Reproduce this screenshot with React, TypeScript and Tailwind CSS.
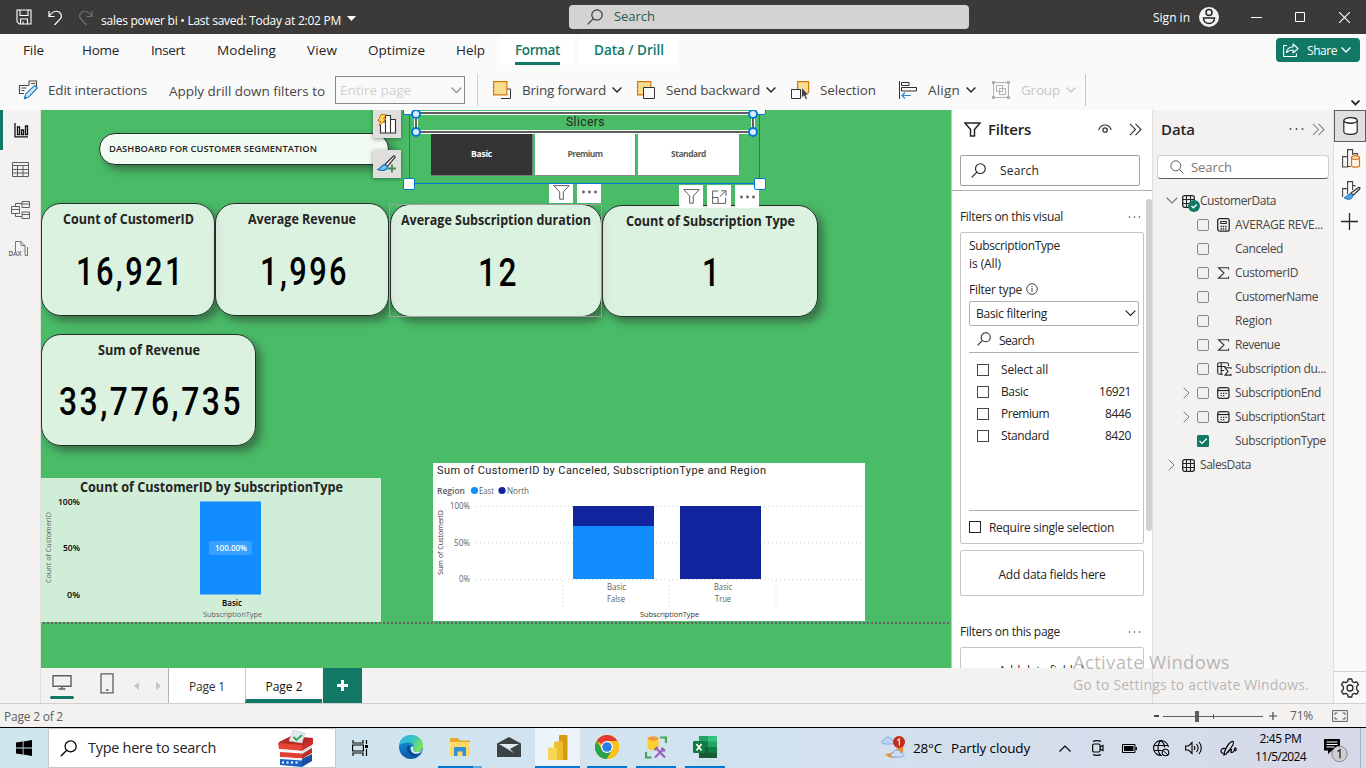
import React, { useLayoutEffect, useRef, useState } from "react";

/* Text set to an exact width, by tracking or (with squeeze) by horizontal scale. */
function Fit({ w, children, className = "", squeeze = false }: { w: number; children: string; className?: string; squeeze?: boolean }) {
  const ref = useRef<HTMLSpanElement>(null);
  const [natural, setNatural] = useState(0);
  useLayoutEffect(() => {
    if (ref.current) setNatural(ref.current.offsetWidth ? ref.current.getBoundingClientRect().width : 0);
  }, []);
  const style: React.CSSProperties = !natural
    ? {}
    : squeeze
      ? { transform: `scaleX(${w / natural})` }
      : { letterSpacing: `${(w - natural) / children.length}px` };
  return (
    <span className={`block shrink-0 whitespace-nowrap ${className}`} style={{ width: w }}>
      <span ref={ref} className="inline-block origin-left" style={style}>{children}</span>
    </span>
  );
}

function Svg({ w, h, className = "", children }: { w: number; h: number; className?: string; children: React.ReactNode }) {
  return (
    <svg width={w} height={h} viewBox={`0 0 ${w} ${h}`} fill="none" className={`block shrink-0 ${className}`}>
      {children}
    </svg>
  );
}

const Magnifier = ({ s = 16, c = "#252423", className = "" }: { s?: number; c?: string; className?: string }) => (
  <svg width={s} height={s} viewBox="0 0 16 16" fill="none" stroke={c} strokeWidth="1.2" className={`block shrink-0 ${className}`}>
    <circle cx="10" cy="6" r="5.2" />
    <path d="M6.3 9.7L.7 15.3" />
  </svg>
);
const ChevronDown = ({ w = 10, c = "#252423", sw = 1.4, className = "" }: { w?: number; c?: string; sw?: number; className?: string }) => (
  <svg width={w} height={w * 0.6} viewBox="0 0 10 6" fill="none" stroke={c} strokeWidth={sw} className={`block shrink-0 ${className}`}>
    <path d="M.6 .6L5 5L9.4 .6" />
  </svg>
);
const DoubleChevron = ({ c = "#323130" }: { c?: string }) => (
  <Svg w={13} h={13}><path d="M1 .8L6.5 6.5L1 12.2M6.5 .8L12 6.5L6.5 12.2" stroke={c} strokeWidth="1.1" /></Svg>
);
const Dots = ({ c = "#484644", gap = 5, r = 0.8 }: { c?: string; gap?: number; r?: number }) => (
  <Svg w={gap * 2 + 3} h={4}>{[0, 1, 2].map((i) => <circle key={i} cx={1.5 + i * gap} cy="2" r={r} fill={c} />)}</Svg>
);

function TitleBar() {
  return (
    <header className="flex h-[34px] shrink-0 items-center bg-[#3b3a39] text-white">
      <Svg w={16} h={16} className="ml-4">
        <path d="M1 1h14v14H3.5L1 12.800zM4 1v5.500h8V1M4.500 15v-5h7v5M7 12.500V15" stroke="#fff" strokeWidth="1.100" />
      </Svg>
      <Svg w={15} h={17} className="ml-4">
        <path d="M1 2v5.500h5.500M1.300 7C4 3 8 1 11.300 3.200C15 6 13 9 12 10.200L6.500 16" stroke="#fff" strokeWidth="1.200" />
      </Svg>
      <Svg w={15} h={17} className="ml-[15px]">
        <path d="M14 2v5.500H8.500M13.700 7C11 3 7 1 3.700 3.200C0 6 2 9 3 10.200L8.500 16" stroke="#737271" strokeWidth="1.200" />
      </Svg>
      <Fit w={240} className="ml-[8px] mt-2 text-xs">sales power bi • Last saved: Today at 2:02 PM</Fit>
      <Svg w={9} h={5} className="ml-[6px] mt-0.5"><path d="M0 0h9L4.500 5z" fill="#fff" /></Svg>
      <div className="ml-[213px] flex h-6 w-[400px] items-center rounded-sm bg-[#d4d3d1]">
        <Magnifier c="#3b3a39" className="ml-[18px]" />
        <Fit w={41} className="ml-[11px] text-[13px] text-[#1f5c50]">Search</Fit>
      </div>
      <Fit w={37} className="ml-[184px] mt-0.5 text-xs">Sign in</Fit>
      <Svg w={20} h={20} className="ml-[9px]">
        <circle cx="10" cy="10" r="10" fill="#f3f2f1" />
        <circle cx="10" cy="5.500" r="3" stroke="#252423" strokeWidth="1.500" />
        <path d="M4.500 11h11c0 3.500-2.500 5.500-5.500 5.500s-5.500-2-5.500-5.500z" stroke="#252423" strokeWidth="1.500" />
      </Svg>
      <Svg w={11} h={11} className="ml-8"><path d="M0 5.500h11" stroke="#fff" /></Svg>
      <Svg w={10} h={10} className="ml-[33px]"><path d="M.5 .5h9v9h-9z" stroke="#fff" /></Svg>
      <Svg w={11} h={11} className="ml-[34px]"><path d="M0 0L11 11M11 0L0 11" stroke="#fff" strokeWidth="1.100" /></Svg>
    </header>
  );
}

function RibbonTabs() {
  const t = "text-[13.500px] text-[#252423]";
  return (
    <nav className="flex h-[32px] shrink-0 items-center">
      <Fit w={21} className={`ml-[23px] ${t}`}>File</Fit>
      <Fit w={37} className={`ml-[38px] ${t}`}>Home</Fit>
      <Fit w={34} className={`ml-[32px] ${t}`}>Insert</Fit>
      <Fit w={59} className={`ml-[32px] ${t}`}>Modeling</Fit>
      <Fit w={30} className={`ml-[31px] ${t}`}>View</Fit>
      <Fit w={57} className={`ml-[31px] ${t}`}>Optimize</Fit>
      <Fit w={29} className={`ml-[31px] ${t}`}>Help</Fit>
      <div className="ml-[15px] flex h-[31px] flex-col justify-end self-start bg-white px-[15px] text-[13.500px] font-semibold text-[#117865]">
        <Fit w={45} className="leading-6">Format</Fit>
        <div className="h-[3px] bg-[#117865]" />
      </div>
      <div className="ml-1 flex h-[31px] w-[100px] self-start bg-white pl-[15px] text-[13.500px] font-semibold text-[#117865]">
        <Fit w={70} className="leading-[32px]">Data / Drill</Fit>
      </div>
      <button className="ml-[597px] flex h-6 w-[84px] items-center rounded bg-[#117865] text-white">
        <Svg w={16} h={14} className="ml-[7px]">
          <path d="M4 2.500H.6v11h12.800V10.500M3.500 9.500C4 6 6.500 4 10 4V1l5 4.500L10 10V7C7.500 7 5.500 7.500 3.500 9.500z" stroke="#fff" strokeWidth="1.100" strokeLinejoin="round" />
        </Svg>
        <Fit w={30} className="ml-2 mt-px text-left text-xs">Share</Fit>
        <ChevronDown c="#fff" className="ml-1" />
      </button>
    </nav>
  );
}

function RibbonTools() {
  const t = "text-[13.500px] text-[#484644]";
  return (
    <div className="flex h-[44px] shrink-0 items-center pt-1">
      <Svg w={20} h={20} className="ml-[18px]">
        <path d="M11 5V1h7.500v6M11 5.500H1.500v8H6M3.500 8h5M3.500 10.500h3M13 3.500h4" stroke="#484644" strokeWidth="1.100" />
        <path d="M6.500 18.500l1.300-4.800L16.500 5.500l2.800 2.500-8.500 9z" fill="#cfe6f8" stroke="#2b88c8" strokeWidth="1.200" />
        <path d="M6 19l1-3 2 2z" fill="#1570b8" />
      </Svg>
      <Fit w={99} className={`ml-[10px] ${t}`}>Edit interactions</Fit>
      <Fit w={156} className={`ml-[22px] mt-0.5 ${t}`}>Apply drill down filters to</Fit>
      <div className="ml-[10px] flex h-[28px] w-[130px] items-center border border-[#8a8886]">
        <Fit w={71} className="ml-[4px] text-[13.500px] text-[#d2d0ce]">Entire page</Fit>
        <ChevronDown w={11} c="#a19f9d" className="ml-[40px]" />
      </div>
      <div className="ml-[12px] h-8 w-px bg-[#d2d0ce]" />
      <Svg w={18} h={18} className="ml-[15px]">
        <path d="M8 17.500h9.500V8H14" stroke="#323130" />
        <path d="M.6 .6h13.300v13.300H.6z" fill="#f9dd8f" stroke="#d97706" strokeWidth="1.200" />
      </Svg>
      <Fit w={84} className={`ml-[11px] ${t}`}>Bring forward</Fit>
      <ChevronDown className="ml-[6px]" />
      <Svg w={18} h={18} className="ml-[15px]">
        <path d="M.6 .6h13.300v13.300H.6z" fill="#f9dd8f" stroke="#d97706" strokeWidth="1.200" />
        <path d="M6.500 6.500h11v11h-11z" fill="#fafafa" stroke="#323130" />
      </Svg>
      <Fit w={94} className={`ml-[11px] ${t}`}>Send backward</Fit>
      <ChevronDown className="ml-[6px]" />
      <Svg w={19} h={19} className="ml-[15px]">
        <path d="M6.600 .6h11v11h-11z" fill="#f9dd8f" stroke="#d97706" strokeWidth="1.200" />
        <path d="M.5 8.500h9v9h-9z" fill="#fafafa" stroke="#323130" />
        <path d="M10.500 6v11l2.500-2.200 1.500 3.700 2-.9-1.500-3.600h3z" fill="#484644" stroke="#fafafa" strokeWidth=".8" />
      </Svg>
      <Fit w={56} className={`ml-[10px] ${t}`}>Selection</Fit>
      <Svg w={18} h={18} className="ml-[23px]">
        <path d="M.5 0v18M2.500 1.500h7.500v3H2.500zM2.500 6.500h15v3.500h-15z" stroke="#323130" />
        <path d="M12 14.500H3M6 11.500l-3 3 3 3" stroke="#2b88c8" strokeWidth="1.200" />
      </Svg>
      <Fit w={32} className={`ml-[11px] ${t}`}>Align</Fit>
      <ChevronDown className="ml-[6px]" />
      <Svg w={18} h={18} className="ml-[16px]">
        <path d="M2 1.500h14M1.500 2v14M16.500 2v14M2 16.500h14M4.500 4.500h6v6h-6zM7.500 7.500h6v6h-6z" stroke="#b3b0ad" />
        <path d="M0 0h3v3H0zM15 0h3v3h-3zM0 15h3v3H0zM15 15h3v3h-3z" fill="#b3b0ad" />
      </Svg>
      <Fit w={39} className="ml-[11px] text-[13.500px] text-[#c8c6c4]">Group</Fit>
      <ChevronDown c="#c8c6c4" className="ml-[6px]" />
      <div className="ml-[9px] h-8 w-px bg-[#c8c6c4]" />
      <ChevronDown w={9} sw={2} className="ml-[265px] mt-[26px]" />
    </div>
  );
}

function LeftRail() {
  return (
    <aside className="flex w-[41px] shrink-0 flex-col items-center border-r border-[#e1dfdd] bg-[#f3f2f1]">
      <div className="flex h-10 w-full items-center border-l-[3px] border-[#117865] pl-[11px]">
        <Svg w={15} h={15}><path d="M1 0v13.800h13M3.500 4h2v7.500h-2zM7.500 7h2v4.500h-2zM11.500 3h2v8.500h-2z" stroke="#111" strokeWidth="1.300" /></Svg>
      </div>
      <Svg w={17} h={15} className="mt-[12px]"><path d="M.5 .5h16v14H.5zM.5 3.500h16M.5 7.500h16M.5 11h16M5.500 3.500v11M11 3.500v11" stroke="#605e5c" /></Svg>
      <Svg w={19} h={18} className="mt-6"><path d="M.5 5.500h8v7h-8zM.5 8.500h8M11 .5h7.500v6H11zM11 3h7.500M11 11h7.500v6.500H11zM11 13.500h7.500M4.500 5.500v-3H11M4.500 12.500v3H11" stroke="#605e5c" /></Svg>
      <div className="relative mt-[22px] h-[18px] w-[19px]">
        <Svg w={19} h={18}><path d="M4.500 10V.5h5.500l4 4V14M10 .5v4h4M16.500 6v8.500h-2.500" stroke="#797775" /></Svg>
        <span className="absolute bottom-[2px] -left-0.5 text-[6.500px] leading-[7px] font-semibold text-[#605e5c]">DAX</span>
      </div>
    </aside>
  );
}

function Card({ box, title, tw, tm, value, vw, vm }: { box: string; title: string; tw: number; tm: string; value: string; vw: number; vm: string }) {
  return (
    <div className={`absolute rounded-[20px] border border-[#252f28] bg-white/80 shadow-[5px_5px_8px_rgba(40,40,40,0.5)] ${box}`}>
      <Fit w={tw} squeeze className={`mx-auto text-[14px] leading-[20px] font-bold text-[#252423] ${tm}`}>{title}</Fit>
      <Fit w={vw} squeeze className={`mx-auto pl-[2px] font-[Roboto] text-[38px] leading-[40px] font-medium tracking-[3px] text-black ${vm}`}>{value}</Fit>
    </div>
  );
}

const Funnel = () => <Svg w={17} h={15}><path d="M.8 .6h15.400L10.300 7v7.200H6.700V7z" stroke="#605e5c" /></Svg>;

function MiniButton({ box, children }: { box: string; children: React.ReactNode }) {
  return <div className={`absolute flex w-6 items-center justify-center bg-white ${box}`}>{children}</div>;
}

function ChartText({ x, y, w, size = 9, anchor = "start", weight = 400, fill = "#605e5c", rot, children }: {
  x: number; y: number; w: number; size?: number; anchor?: "start" | "middle" | "end"; weight?: number; fill?: string; rot?: boolean; children: string;
}) {
  return (
    <text x={x} y={y} textLength={w} lengthAdjust="spacingAndGlyphs" fontSize={size} textAnchor={anchor} fontWeight={weight} fill={fill}
      transform={rot ? `rotate(-90 ${x} ${y})` : undefined}>{children}</text>
  );
}

function SubscriptionChart() {
  return (
    <Svg w={340} h={144} className="absolute left-0 top-[368px] bg-[#d0edd8]">
      <ChartText x={39} y={14} w={263} size={14} weight={700} fill="#252423">Count of CustomerID by SubscriptionType</ChartText>
      <ChartText x={39} y={27} w={22} size={9.5} weight={600} fill="#000" anchor="end">100%</ChartText>
      <ChartText x={39} y={73} w={17} size={9.5} weight={600} fill="#000" anchor="end">50%</ChartText>
      <ChartText x={39} y={120} w={13} size={9.5} weight={600} fill="#000" anchor="end">0%</ChartText>
      <ChartText x={10} y={105} w={71} size={8} rot>Count of CustomerID</ChartText>
      <rect x="159" y="23.500" width="61" height="93" fill="#118dff" />
      <rect x="168" y="63" width="43" height="14" rx="2" fill="#fff" opacity=".17" />
      <ChartText x={174} y={73} w={32} size={9.5} weight={600} fill="#fff">100.00%</ChartText>
      <ChartText x={181} y={128} w={20} size={9.5} weight={600} fill="#000">Basic</ChartText>
      <ChartText x={162} y={139} w={59} size={8}>SubscriptionType</ChartText>
    </Svg>
  );
}

function RegionChart() {
  return (
    <Svg w={432} h={158} className="absolute left-[392px] top-[353px] bg-white">
      <g fontFamily="Roboto"><text x="4" y="11" textLength="329" fontSize="11" fill="#252423">Sum of CustomerID by Canceled, SubscriptionType and Region</text></g>
      <ChartText x={4} y={31} w={28} size={9.5} weight={600}>Region</ChartText>
      <circle cx="41.500" cy="27.500" r="3.600" fill="#118dff" />
      <ChartText x={46} y={31} w={15} size={9.5}>East</ChartText>
      <circle cx="69" cy="27.500" r="3.600" fill="#12239e" />
      <ChartText x={74} y={31} w={22} size={9.5}>North</ChartText>
      <ChartText x={37} y={46} w={20} size={9.5} anchor="end">100%</ChartText>
      <ChartText x={37} y={83} w={16} size={9.5} anchor="end">50%</ChartText>
      <ChartText x={37} y={119} w={11} size={9.5} anchor="end">0%</ChartText>
      <ChartText x={10} y={112} w={65} size={8} weight={500} fill="#323130" rot>Sum of CustomerID</ChartText>
      <path d="M43 43.500H430M43 80H430M43 116.500H430M129.500 118v27M236.500 118v27M343 118v27" stroke="#d2d0ce" strokeDasharray="1 3" />
      <rect x="140" y="43" width="81" height="20" fill="#12239e" />
      <rect x="140" y="63" width="81" height="53" fill="#118dff" />
      <rect x="247" y="43" width="81" height="73" fill="#12239e" />
      <ChartText x={174} y={127} w={19} size={9.5}>Basic</ChartText>
      <ChartText x={174} y={139} w={18} size={9.5}>False</ChartText>
      <ChartText x={281} y={127} w={18} size={9.5}>Basic</ChartText>
      <ChartText x={282} y={139} w={16} size={9.5}>True</ChartText>
      <ChartText x={207} y={154} w={59} size={8} fill="#323130">SubscriptionType</ChartText>
    </Svg>
  );
}

const Handle = ({ box }: { box: string }) => <div className={`absolute size-3 rounded-[2px] border border-[#0078d4] bg-white ${box}`} />;
const Ring = ({ box }: { box: string }) => <div className={`absolute size-[10px] rounded-full border-2 border-[#0078d4] bg-[#deecf9] ${box}`} />;

/* Report canvas: visuals stand at free positions on the page. */
function Canvas() {
  return (
    <div className="relative h-[558px] overflow-hidden bg-[#4abc68]">
      <div className="absolute left-[58px] top-[23px] flex h-8 w-[290px] items-center rounded-full border border-[#252f28] bg-[#f2faf4] pl-[9px] shadow-[5px_5px_8px_rgba(40,40,40,0.5)]">
        <Fit w={208} className="text-[9.300px] font-semibold text-[#252423]">DASHBOARD FOR CUSTOMER SEGMENTATION</Fit>
      </div>
      <Card box="left-0 top-[93px] h-[113px] w-[174px]" title="Count of CustomerID" tw={131} tm="mt-[5px]" value="16,921" vw={109} vm="mt-[23px]" />
      <Card box="left-[174px] top-[93px] h-[113px] w-[174px]" title="Average Revenue" tw={108} tm="mt-[5px]" value="1,996" vw={89} vm="mt-[23px]" />
      <Card box="left-[349px] top-[94px] h-[113px] w-[212px]" title="Average Subscription duration" tw={190} tm="mt-[5px]" value="12" vw={41} vm="mt-[23px]" />
      <div className="absolute left-[348px] top-[94px] h-[113px] w-[213px] border border-[#a19f9d]" />
      <Card box="left-[561px] top-[95px] h-[112px] w-[216px]" title="Count of Subscription Type" tw={169} tm="mt-[5px]" value="1" vw={20} vm="mt-[22px]" />
      <Card box="left-0 top-[224px] h-[112px] w-[215px]" title="Sum of Revenue" tw={102} tm="mt-[5px]" value="33,776,735" vw={184} vm="mt-[22px]" />

      <div className="absolute -top-[5px] left-[368px] h-[79px] w-[351px] border border-[#0078d4]" />
      <div className="absolute left-[390px] top-[24px] flex gap-[2px] text-[8.500px] font-bold text-[#605e5c]">
        <div className="flex h-[42px] w-[102px] items-center justify-center border-b border-r border-[#777] bg-[#333] text-white"><Fit w={21}>Basic</Fit></div>
        <div className="flex h-[42px] w-[101px] items-center justify-center border-b border-r border-[#8a8886] bg-white"><Fit w={35}>Premium</Fit></div>
        <div className="flex h-[42px] w-[102px] items-center justify-center border-b border-r border-[#8a8886] bg-white"><Fit w={35}>Standard</Fit></div>
      </div>
      <div className="absolute left-[373px] top-[1px] h-[23px] w-[341px] border border-white" />
      <div className="absolute left-[374px] top-[2px] flex h-[21px] w-[339px] items-center justify-center border-2 border-[#605e5c] pb-[2px] outline-1 -outline-offset-3 outline-white">
        <Fit w={39} className="pl-px font-[Roboto] text-xs text-[#252423]">Slicers</Fit>
      </div>
      <Handle box="-top-[7px] left-[362px]" /><Handle box="-top-[7px] left-[713px]" />
      <Handle box="left-[362px] top-[68px]" />
      <Ring box="-top-[1px] left-[370px]" /><Ring box="-top-[1px] left-[707px]" />
      <Ring box="left-[370px] top-[17px]" /><Ring box="left-[707px] top-[17px]" />

      <MiniButton box="left-[508px] top-[74px] h-[19px] pb-[3px]"><Funnel /></MiniButton>
      <MiniButton box="left-[536px] top-[74px] h-[19px] pb-[3px]"><Dots c="#605e5c" gap={6} r={1.4} /></MiniButton>
      <MiniButton box="left-[638px] top-[75px] h-[23px]"><Funnel /></MiniButton>
      <MiniButton box="left-[666px] top-[75px] h-[23px]">
        <Svg w={15} h={14}><path d="M6 1H.6v12.400h13V8M9 .8h5v5M14 .8L8 6.500M.6 7.500h5.500v5.900" stroke="#605e5c" /></Svg>
      </MiniButton>
      <MiniButton box="left-[694px] top-[75px] h-[23px]"><Dots c="#605e5c" gap={6} r={1.4} /></MiniButton>
      <Handle box="left-[713px] top-[68px]" />

      <div className="absolute left-[332px] top-0 flex size-7 items-center justify-center bg-[#e1dfdd] shadow-[0_1px_4px_rgba(0,0,0,0.4)]">
        <Svg w={20} h={20}>
          <path d="M3.500 8h5v11h-5zM8.500 1.500h5V19h-5zM13.500 5.500h5V19h-5z" fill="#fff" stroke="#323130" strokeWidth="1.100" />
          <path d="M4 .5h5L6.500 5H9L2 12l1.500-5H.8z" fill="#ffd35c" stroke="#d97706" />
        </Svg>
      </div>
      <div className="absolute left-[332px] top-10 flex size-7 items-center justify-center bg-[#e1dfdd] shadow-[0_1px_4px_rgba(0,0,0,0.4)]">
        <Svg w={20} h={19}>
          <path d="M8 9.500L16.500 1c1-.6 2 .3 1.400 1.400L10.500 11.500z" fill="#fff" stroke="#323130" strokeWidth="1.200" />
          <path d="M.8 14.500C4 14 4 10 7.500 9.700C9.500 10 10.600 11.200 10.300 12.700C9.500 16 4 16 .8 14.500z" fill="#7cc0f2" stroke="#1570b8" strokeWidth="1.200" />
          <path d="M15 9.500v8M11 13.500h8" stroke="#3d8b5a" strokeWidth="1.800" />
        </Svg>
      </div>

      <SubscriptionChart />
      <RegionChart />
      <Svg w={910} h={2} className="absolute left-0 top-[512px]"><path d="M2 1H908" stroke="#6b6160" strokeWidth="2" strokeDasharray="2 2" /></Svg>
    </div>
  );
}

function PageTabs() {
  return (
    <div className="flex h-[35px] bg-[#f3f2f1]">
      <div className="ml-[9px] flex w-6 flex-col items-center pt-[7px]">
        <Svg w={20} h={15}><path d="M1 .8h18v10.400H1zM10 11v3M6.500 14h7" stroke="#605e5c" strokeWidth="1.400" /></Svg>
        <div className="mt-[6px] h-[3px] w-6 rounded-full bg-[#117865]" />
      </div>
      <Svg w={14} h={21} className="ml-[26px] mt-[5px]"><path d="M1 .8h12v19H1zM6 17h2.500" stroke="#605e5c" strokeWidth="1.300" /></Svg>
      <Svg w={5} h={8} className="ml-[20px] mt-[14px]"><path d="M5 0v8L0 4z" fill="#c8c6c4" /></Svg>
      <Svg w={5} h={8} className="ml-[17px] mt-[14px]"><path d="M0 0v8l5-4z" fill="#c8c6c4" /></Svg>
      <div className="ml-[7px] flex w-[77px] justify-center border-l border-[#b3b0ad] bg-white pt-[10px] text-xs leading-[18px] text-[#323130]"><Fit w={36}>Page 1</Fit></div>
      <div className="flex w-[77px] justify-center border-b-4 border-l border-b-[#117865] border-l-[#c8c6c4] bg-white pt-[10px] text-xs leading-[18px] font-medium text-[#111]"><Fit w={37}>Page 2</Fit></div>
      <div className="ml-[1px] flex w-[39px] items-center justify-center bg-[#117865]">
        <Svg w={11} h={11}><path d="M5.500 0v11M0 5.500h11" stroke="#fff" strokeWidth="3" /></Svg>
      </div>
    </div>
  );
}

function FilterRow({ label, w, count, cw }: { label: string; w: number; count?: string; cw?: number }) {
  return (
    <div className="flex h-[22px] items-center pl-4 pr-3">
      <div className="size-3 border border-[#484644]" />
      <Fit w={w} className="ml-3">{label}</Fit>
      {count && <Fit w={cw || 0} className="ml-auto">{count}</Fit>}
    </div>
  );
}

function FiltersPane() {
  return (
    <section className="flex w-[201px] shrink-0 flex-col bg-[#f3f2f1] text-xs text-[#252423]">
      <div className="h-[558px] overflow-hidden border-l border-[#c8c6c4] bg-white">
        <div className="flex h-[38px] items-center pl-3">
          <Svg w={17} h={15}><path d="M1 1h15L10.500 7.500v6.500h-4V7.500z" stroke="#252423" strokeWidth="1.500" /></Svg>
          <Fit w={43} className="ml-[7px] text-[15px] font-semibold">Filters</Fit>
          <Svg w={14} h={10} className="ml-[67px]"><path d="M.8 6C2 2.500 4.500 1 7 1s5 1.500 6.200 5" stroke="#323130" strokeWidth="1.200" /><circle cx="7" cy="6" r="2.200" stroke="#323130" strokeWidth="1.300" /></Svg>
          <div className="ml-[17px]"><DoubleChevron /></div>
        </div>
        <div className="ml-2 mt-[7px] flex h-[31px] w-[180px] items-center rounded-[2px] border border-[#a19f9d]">
          <Magnifier className="ml-[10px]" s={15} />
          <Fit w={39} className="ml-[14px]">Search</Fit>
        </div>
        <div className="mt-1 h-px bg-[#b3b0ad]" />
        <div className="flex">
          <div className="ml-2 w-[184px] shrink-0">
            <div className="flex h-[41px] items-center justify-between pt-[10px] pr-[3px]"><Fit w={103}>Filters on this visual</Fit><Dots /></div>
            <div className="flex h-[312px] flex-col rounded-[2px] border border-[#c8c6c4] pt-1 pr-1 pl-2">
              <Fit w={91} className="leading-[18px]">SubscriptionType</Fit>
              <Fit w={32} className="leading-[18px]">is (All)</Fit>
              <div className="mt-[8px] flex h-[18px] items-center"><Fit w={53}>Filter type</Fit>
                <Svg w={12} h={12} className="ml-[4px] -mt-0.5"><circle cx="6" cy="6" r="5.300" stroke="#484644" /><path d="M6 5v4M6 3v1.200" stroke="#484644" /></Svg></div>
              <div className="mt-[2px] flex h-[25px] shrink-0 items-center rounded-[2px] border border-[#b3b0ad]"><Fit w={71} className="ml-[6px]">Basic filtering</Fit><ChevronDown w={11} sw={1.1} className="ml-[78px]" /></div>
              <div className="flex h-[27px] shrink-0 items-center border-b border-[#b3b0ad] pt-1"><Magnifier className="-mt-1 ml-2" s={14} /><Fit w={35} className="ml-2">Search</Fit></div>
              <div className="-mr-1 -ml-2 mt-[6px]">
                <FilterRow label="Select all" w={47} />
                <FilterRow label="Basic" w={27} count="16921" cw={32} />
                <FilterRow label="Premium" w={48} count="8446" cw={26} />
                <FilterRow label="Standard" w={48} count="8420" cw={26} />
              </div>
              <div className="mt-auto flex h-[33px] shrink-0 items-center border-t border-[#b3b0ad]"><div className="size-3 border-[1.500px] border-[#252423]" /><Fit w={125} className="ml-2 mt-0.5">Require single selection</Fit></div>
            </div>
            <div className="mt-[6px] flex h-[46px] items-center justify-center rounded-[2px] border border-[#c8c6c4] pt-[3px]"><Fit w={107}>Add data fields here</Fit></div>
            <div className="flex h-[51px] items-center justify-between pt-[20px] pr-[3px]"><Fit w={100}>Filters on this page</Fit><Dots /></div>
            <div className="flex h-[46px] items-center justify-center rounded-[2px] border border-[#c8c6c4] pt-0.5"><Fit w={107}>Add data fields here</Fit></div>
          </div>
          <div className="ml-[2px] mt-2 h-[332px] w-[6px] rounded-full bg-[#d2d0ce]" />
        </div>
      </div>
    </section>
  );
}

const TableIcon = () => <Svg w={13} h={13}><rect x=".7" y=".7" width="11.600" height="11.600" rx="2" stroke="#252423" strokeWidth="1.300" /><path d="M4.500 .7v11.600M8.500 .7v11.600M.7 4.500h11.600M.7 8.500h11.600" stroke="#252423" strokeWidth="1.100" /></Svg>;

function FieldIcon({ kind }: { kind?: string }) {
  if (kind === "calc") return <Svg w={13} h={14}><rect x=".7" y=".7" width="11.500" height="12.500" rx="2" stroke="#252423" strokeWidth="1.300" /><path d="M3.500 3.500h6v2h-6z" stroke="#252423" /><path d="M3.500 8.500h6M3.500 11h6" stroke="#252423" strokeWidth="1.400" strokeDasharray="1.400 .9" /></Svg>;
  if (kind === "sum") return <Svg w={13} h={12}><path d="M11.500 2.500V.7H1.500L7 6l-5.500 5.300h10V9.500" stroke="#323130" strokeWidth="1.100" /></Svg>;
  if (kind === "calcol") return <Svg w={15} h={14}><path d="M6 12.300H2.700C1.200 12.300 .7 11.500 .7 10.300V2.700C.7 1.300 1.500 .7 2.700 .7h6.800c1.300 0 2 .7 2 2V4M4.200 .7v11.600M.7 4.500h8M4.200 8.500h3" stroke="#252423" strokeWidth="1.100" /><path d="M14 7V5.700H8l3 3.700-3 3.700h6v-1.300" stroke="#252423" strokeWidth="1.100" /></Svg>;
  if (kind === "date") return <Svg w={13} h={12}><rect x=".7" y=".7" width="11.300" height="10.600" rx="2" stroke="#252423" strokeWidth="1.200" /><path d="M.7 3.500h11.300" stroke="#252423" strokeWidth="1.200" /><path d="M3.500 6.300h6.500M3.500 8.700h4.500" stroke="#252423" strokeWidth="1.300" strokeDasharray="1.300 1.200" /></Svg>;
  return null;
}

const fields: { name: string; w: number; kind?: string; expand?: boolean; on?: boolean }[] = [
  { name: "AVERAGE REVE...", w: 88, kind: "calc" },
  { name: "Canceled", w: 48 },
  { name: "CustomerID", w: 63, kind: "sum" },
  { name: "CustomerName", w: 83 },
  { name: "Region", w: 37 },
  { name: "Revenue", w: 45, kind: "sum" },
  { name: "Subscription du...", w: 91, kind: "calcol" },
  { name: "SubscriptionEnd", w: 86, kind: "date", expand: true },
  { name: "SubscriptionStart", w: 90, kind: "date", expand: true },
  { name: "SubscriptionType", w: 91, on: true },
];

function DataPane() {
  return (
    <section className="w-[182px] shrink-0 border-x border-[#e1dfdd] bg-[#f3f2f1] text-xs text-[#484644]">
      <div className="flex h-[38px] items-center pl-2">
        <Fit w={34} className="text-[15px] font-semibold text-[#252423]">Data</Fit>
        <div className="ml-[94px]"><Dots gap={6} r={0.9} /></div>
        <div className="ml-[8px]"><DoubleChevron c="#8a8886" /></div>
      </div>
      <div className="ml-1 mt-[7px] flex h-6 w-[172px] items-center rounded border border-[#d2d0ce] border-b-[#605e5c] bg-white">
        <Svg w={14} h={14} className="ml-[12px]"><circle cx="5.800" cy="5.800" r="5" stroke="#605e5c" /><path d="M9.500 9.500l4 4" stroke="#605e5c" /></Svg>
        <Fit w={41} className="ml-[7px] mt-0.5 text-[13px] text-[#797775]">Search</Fit>
      </div>
      <div className="relative mt-[10px] flex h-6 items-center pl-[13px]">
        <ChevronDown w={12} c="#797775" sw={1} />
        <div className="ml-1"><TableIcon /></div>
        <Fit w={76} className="ml-[5px]">CustomerData</Fit>
        <Svg w={12} h={12} className="absolute left-[35px] top-[11px]"><circle cx="6" cy="6" r="6" fill="#117865" /><path d="M3.500 6l1.800 1.800L8.700 4.500" stroke="#fff" strokeWidth="1.300" /></Svg>
      </div>
      {fields.map((f) => (
        <div key={f.name} className="flex h-6 items-center">
          <div className="w-[44px] shrink-0 pl-[30px]">{f.expand && <Svg w={7} h={12}><path d="M.7 .7L6 6L.7 11.300" stroke="#797775" /></Svg>}</div>
          {f.on ? (
            <Svg w={12} h={12}><rect width="12" height="12" rx="1.500" fill="#117865" /><path d="M2.500 6l2.500 2.500 4.800-5" stroke="#fff" strokeWidth="1.200" /></Svg>
          ) : (
            <div className="size-3 shrink-0 rounded-[2px] border border-[#8a8886]" />
          )}
          <div className="ml-2 w-[18px] shrink-0"><FieldIcon kind={f.kind} /></div>
          <Fit w={f.w}>{f.name}</Fit>
        </div>
      ))}
      <div className="flex h-6 items-center pl-[15px]">
        <Svg w={7} h={12}><path d="M.7 .7L6 6L.7 11.300" stroke="#797775" /></Svg>
        <div className="ml-[7px]"><TableIcon /></div>
        <Fit w={51} className="ml-[5px]">SalesData</Fit>
      </div>
    </section>
  );
}

function RightRail() {
  return (
    <aside className="flex w-8 shrink-0 flex-col items-center bg-[#faf9f8]">
      <div className="flex h-8 w-full items-center justify-center border border-[#605e5c] bg-[#e1dfdd]">
        <Svg w={15} h={18}><ellipse cx="7.500" cy="3.500" rx="6.700" ry="2.800" stroke="#252423" strokeWidth="1.200" fill="#fff" /><path d="M.8 3.500v11c0 1.600 3 2.800 6.700 2.800s6.700-1.200 6.700-2.800v-11c0 1.600-3 2.800-6.700 2.800S.8 5.100.8 3.500z" fill="#fff" stroke="#252423" strokeWidth="1.200" /></Svg>
      </div>
      <Svg w={19} h={19} className="mt-[7px] ml-[2px]">
        <path d="M.6 18V7.600h5V18zM5.600 18V.6h5V6M10.600 4.600h5v2M5.600 17.500h3" stroke="#484644" strokeWidth="1.100" />
        <path d="M9.500 8.500v7.700c0 1.200 1.800 2 4 2s4-.8 4-2V8.500z" fill="#fff2e0" stroke="#d9731a" strokeWidth="1.200" /><ellipse cx="13.500" cy="8.500" rx="4" ry="1.900" fill="#fbe0c0" stroke="#d9731a" strokeWidth="1.200" />
      </Svg>
      <Svg w={19} h={19} className="mt-[13px] ml-[2px]">
        <path d="M.6 16V7.600h5V13M5.600 8V.6h5V9M10.600 4.600h3" stroke="#484644" strokeWidth="1.100" />
        <path d="M9 12L16.500 6.500c1.200-.4 1.800.5 1.200 1.500L11.500 14z" fill="#fff" stroke="#323130" strokeWidth="1.200" />
        <path d="M2 16.500c3 0 3.500-3.500 6.500-3.700c1.800.3 2.700 1.700 2 3C9.300 19 5 19 2 16.500z" fill="#4ea6e8" stroke="#1570b8" />
      </Svg>
      <Svg w={17} h={17} className="mt-[13px] -ml-px"><path d="M8.500 0v17M0 8.500h17" stroke="#252423" strokeWidth="1.300" /></Svg>
      <div className="mt-auto flex h-8 w-full items-center justify-center border-t border-[#d2d0ce]">
        <Svg w={20} h={20}>
          <path d="M7.700 3.500L8.300 1h3.400l.6 2.500 1.900 1.100 2.500-.8 1.800 3-1.900 1.800v2.800l1.900 1.800-1.800 3-2.500-.8-1.900 1.100-.6 2.500H8.300l-.6-2.500-1.900-1.100-2.500.8-1.800-3 1.900-1.800V8.600L1.500 6.800l1.800-3 2.500.8z" stroke="#252423" strokeWidth="1.300" strokeLinejoin="round" />
          <circle cx="10" cy="10" r="3" stroke="#252423" strokeWidth="1.300" />
        </Svg>
      </div>
    </aside>
  );
}

function StatusBar() {
  return (
    <footer className="flex h-[24px] shrink-0 items-center border-t border-[#d2d0ce] bg-[#f3f2f1] text-xs text-[#605e5c]">
      <Fit w={59} className="ml-1 mt-0.5">Page 2 of 2</Fit>
      <Svg w={5} h={2} className="ml-[1091px]"><path d="M0 1h5" stroke="#484644" strokeWidth="2" /></Svg>
      <Svg w={100} h={12} className="ml-[4px]"><path d="M0 6.500h100M50.500 4v5" stroke="#605e5c" /><path d="M32 1h4v11h-4z" fill="#605e5c" /></Svg>
      <Svg w={8} h={8} className="ml-[6px]"><path d="M4 0v8M0 4h8" stroke="#484644" strokeWidth="1.200" /></Svg>
      <Fit w={23} className="ml-[13px]">71%</Fit>
      <Svg w={16} h={12} className="ml-[19px]"><path d="M.6 .6h14.800v10.800H.6zM3 5V3h2.500M3 7v2h2.500M13 5V3h-2.500M13 7v2h-2.500" stroke="#605e5c" /></Svg>
    </footer>
  );
}

function TaskApp({ under, active, children }: { under?: string; active?: boolean; children: React.ReactNode }) {
  return (
    <div className="flex h-full w-[49px] shrink-0 flex-col items-center justify-end">
      <div className={`flex w-[45px] flex-1 items-center justify-center ${active ? "bg-[#edf4f9]" : ""}`}>{children}</div>
      <div className={`h-[2px] shrink-0 ${under || "w-0"}`} />
    </div>
  );
}

function Taskbar() {
  return (
    <div className="flex h-[41px] shrink-0 items-center border-t border-black bg-linear-to-r from-[#cfe6ee] via-[#d1e3ef] to-[#d6d9e8] text-black">
      <Svg w={16} h={16} className="ml-4"><path d="M0 2.500L6.700 1.500v6H0zM7.500 1.400L16 0v7.500H7.500zM0 8.500h6.700v6L0 13.500zM7.500 8.500H16V16l-8.500-1.400z" fill="#000" /></Svg>
      <div className="ml-4 flex h-10 w-[288px] items-center border border-[#c8c8c8] bg-white">
        <Magnifier className="ml-[11px]" c="#000" s={17} />
        <Fit w={128} className="ml-[11px] text-[14.500px] text-[#252423]">Type here to search</Fit>
        <Svg w={36} h={38} className="ml-[62px]">
          <path d="M1 13l12-6 22 2-1 7-10 5L1 18z" fill="#b52a26" />
          <path d="M11 12L15 1l12 3-3 10z" fill="#e4e6ee" stroke="#c2c6d3" strokeWidth=".5" /><path d="M15.500 8l3 3 5.500-5" stroke="#36a852" strokeWidth="1.800" />
          <path d="M0 14l24 2v6L1 20z" fill="#e94438" /><path d="M24 16l11-7v6l-11 7z" fill="#c9302c" />
          <path d="M2 20l22 2v2.500L2 23z" fill="#f5f6fa" /><path d="M2 23l22 1.500v5L2 28z" fill="#e23c33" /><path d="M2 28l22 1.500v2L2 30z" fill="#f1f2f7" />
          <path d="M2 30l22 1.500V38L2 36z" fill="#1a62c4" /><path d="M24 22l10-6v3l-10 6z" fill="#dcdfea" /><path d="M24 25l10-6v5l-10 6z" fill="#bd2f2a" /><path d="M24 30l10-5v7l-10 6z" fill="#184f9f" />
          <path d="M4 33.500h18" stroke="#fff" strokeWidth="2" strokeDasharray="2 2.500" />
        </Svg>
      </div>
      <Svg w={17} h={16} className="ml-4"><path d="M1 0v3h10V0M1 16v-3h10v3M.6 5h10.800v6H.6zM14.500 0v4M14.500 9v7" stroke="#000" strokeWidth="1.200" /><path d="M13 5h3v3h-3z" fill="#000" /></Svg>
      <div className="ml-[17px] flex h-full">
        <TaskApp>
          <svg width="24" height="24" viewBox="0 0 24 24" className="block">
            <defs><linearGradient id="eg" x1="0" y1="0" x2="1" y2=".4"><stop stopColor="#2bb4e8" /><stop offset=".6" stopColor="#36c7c4" /><stop offset="1" stopColor="#7ce25a" /></linearGradient>
              <linearGradient id="eb" x1="0" y1="0" x2="0" y2="1"><stop stopColor="#1a9be0" /><stop offset="1" stopColor="#0b59a8" /></linearGradient></defs>
            <circle cx="12" cy="12" r="12" fill="url(#eb)" />
            <path d="M0 11C.5 4.500 5.500 0 12 0c7 0 12 5 12 10.500 0 4-3 6.500-6.500 6.500-2.500 0-4-1-3.500-2.500 2-3.500-.5-7-5-7C5 7.500 1.500 9 0 11z" fill="url(#eg)" />
            <path d="M9 10c-2 3-1 8 3 11 4 1 8 0 10.500-3-3 1.500-7 1.200-9-.5-2-1.500-3-4-2-6.500z" fill="#0a4a94" />
            <path d="M12 12c1-1 2.500-.7 2.500.5 0 .8-.8 1.200-.6 2.200.5 1.500 2.100 2.300 3.800 2.300 2.300 0 4.500-.7 5.700-2.500-1 3.500-5.200 5-8.200 4-2.800-1-4.200-4-3.200-6.500z" fill="#d6ebf4" />
          </svg>
        </TaskApp>
        <TaskApp under="w-[44px] bg-linear-to-r from-[#0078d4] from-80% to-[#5fa8e0] to-80%">
          <Svg w={22} h={20}><path d="M1 1h8l2 2.500h10V19H1z" fill="#e6a92a" /><path d="M1 5h20v14H1z" fill="#ffd869" /><path d="M5 19v-7.500c0-1 .5-1.500 1.500-1.500h9c1 0 1.500.5 1.500 1.500V19h-3.500v-4.500h-5V19z" fill="#2f8fd8" /></Svg>
        </TaskApp>
        <TaskApp>
          <Svg w={24} h={20}><path d="M0 6.500L12 0l12 6.500V20H0z" fill="#3c4347" /><path d="M2 7h20l-9 5 4 4z" fill="#dbe9f1" /></Svg>
        </TaskApp>
        <TaskApp active under="w-[45px] bg-[#0078d4]">
          <Svg w={20} h={25}><rect x="11" width="8.500" height="25" rx="1" fill="#d79a12" /><rect x="6" y="6.500" width="9" height="18.500" rx="1" fill="#edbf2c" /><rect y="12.500" width="9" height="12.500" rx="1" fill="#f6d657" /></Svg>
        </TaskApp>
        <TaskApp under="w-[40px] bg-[#0078d4]">
          <svg width="24" height="24" viewBox="0 0 24 24" className="block">
            <circle cx="12" cy="12" r="12" fill="#fbc116" /><path d="M12 12L1.600 6A12 12 0 0 1 22.400 6z" fill="#e33b2e" /><path d="M22.400 6H12v6z" fill="#e33b2e" />
            <path d="M1.600 6A12 12 0 0 0 12 24l5.200-9L12 12l-5 2.500z" fill="#2da04e" /><path d="M12 24A12 12 0 0 0 22.400 6H12l5.200 9z" fill="#fbc116" />
            <circle cx="12" cy="12" r="6" fill="#fff" /><circle cx="12" cy="12" r="4.800" fill="#2b7de9" />
          </svg>
        </TaskApp>
        <TaskApp under="w-[40px] bg-[#0078d4]">
          <Svg w={22} h={23}><path d="M2.500 2v10c0 3 12 3 11 0V2z" fill="#fbd12f" /><ellipse cx="8" cy="2.500" rx="5.500" ry="2.200" fill="#f09a42" /><path d="M15 1.500h6V7M1 16v5.500h5.500" stroke="#4aa455" strokeWidth="2.200" /><path d="M10 21.500l9-9M11.500 12.500l8.500 9M9.500 14l3-3M17 11.500c-.5 2 1 3.500 3.500 3" stroke="#9b5cc0" strokeWidth="2" /></Svg>
        </TaskApp>
        <TaskApp under="w-[40px] bg-[#0078d4]">
          <Svg w={24} h={22}><path d="M6 0h18v22H6z" fill="#21a366" /><path d="M15 0h9v5.500h-9z" fill="#33c481" /><path d="M6 5.500h9V11H6z" fill="#107c41" /><path d="M15 11h9v5.500h-9z" fill="#107c41" /><path d="M6 11h9v11H6zM15 16.500h9V22h-9z" fill="#185c37" /><rect y="5" width="12" height="12" rx="1" fill="#107c41" /><path d="M3.500 8l5 6.500M8.500 8l-5 6.500" stroke="#fff" strokeWidth="1.700" /></Svg>
        </TaskApp>
      </div>
      <Svg w={26} h={24} className="ml-[152px]">
        <path d="M17 3c3 8-3 15-13 15 5 6 16 5 18-2 1-5-1-10-5-13z" fill="#ef8b26" />
        <path d="M3 8c-3 0-3-4 0-4 1-4 7-4 8 0 3 0 3 4 0 4z" fill="#bcd3f2" stroke="#8cace0" /><path d="M12 21c-3 0-3-4 0-4 1-4 7-4 8 0 4 0 4 4 0 4z" fill="#cbdcf6" stroke="#8cace0" />
        <circle cx="18" cy="6" r="6" fill="#c42b1c" /><path d="M16.500 4.500L18.300 3v6.500" stroke="#fff" strokeWidth="1.100" />
      </Svg>
      <Fit w={29} className="ml-[6px] text-[13.500px]">28°C</Fit>
      <Fit w={79} className="ml-[9px] text-[13.500px]">Partly cloudy</Fit>
      <Svg w={12} h={7} className="ml-[29px]"><path d="M.5 6.500L6 1l5.500 5.500" stroke="#000" strokeWidth="1.200" /></Svg>
      <Svg w={13} h={16} className="ml-5"><rect x="1.600" y="4" width="7.500" height="8" rx="1.500" stroke="#000" strokeWidth="1.200" /><path d="M9 7l3-1.500v5L9 9M2 1.500C4 .3 8 .3 10 1.500M2 14.500c2 1.200 6 1.200 8 0" stroke="#000" strokeWidth="1.100" /></Svg>
      <Svg w={15} h={9} className="ml-[18px]"><path d="M.5 .5h12.500v8H.5z" stroke="#000" /><path d="M2 2h9.500v5H2zM13.500 3H15v3h-1.500z" fill="#000" /></Svg>
      <Svg w={17} h={17} className="ml-4"><path d="M15.500 7A7.500 7.500 0 1 0 9 15.500M.7 5.500h14M.7 10.500h8M8 .5C4 4 4 12 8 15.500M8 .5c2.500 2 3.500 4.500 3.500 7" stroke="#000" strokeWidth="1.100" /><circle cx="12.500" cy="12.500" r="3.300" stroke="#000" strokeWidth="1.100" /><path d="M10 10.500l5 4.500" stroke="#000" /></Svg>
      <Svg w={17} h={14} className="ml-[15px]"><path d="M.6 5h2.900L7 1.500v11L3.500 9H.6zM9 5c1 1.200 1 2.800 0 4M11.500 3c2 2.500 2 5.500 0 8M14 1c3 3.500 3 8.500 0 12" stroke="#000" strokeWidth="1.100" /></Svg>
      <Svg w={17} h={17} className="ml-[18px]"><path d="M4.500 12C7 5 11 .5 13 1.500c1.500 1.500-2 7-7 12.500l-2 1zM3.500 13.500C1 13.500 .5 11 1.500 9.500S5 8 5.500 9M8 12.500c1.500-2.500 3-3.500 3.500-3s-1.500 3 0 3c1.500.2 3-1.500 3-3s1-2 1.500-1 0 2-1 2.500" stroke="#000" strokeWidth="1.200" /></Svg>
      <div className="ml-[18px] flex w-[51px] flex-col items-center text-xs leading-[18px]"><Fit w={42}>2:45 PM</Fit><Fit w={51}>11/5/2024</Fit></div>
      <Svg w={25} h={24} className="ml-[18px] mt-1"><path d="M0 1h16v11.500H8L4 16v-3.500H0z" fill="#000" /><path d="M2.500 4h11M2.500 6.500h11M2.500 9h8" stroke="#fff" /><circle cx="15.500" cy="16" r="7.700" fill="#cdced4" stroke="#8a8886" /><path d="M13.500 13.500l2.500-1.800v8.500" stroke="#252423" strokeWidth="1.300" /></Svg>
      <div className="ml-[11px] h-full w-px bg-[#a9b0bd]" />
    </div>
  );
}

export default function App() {
  return (
    <div className="relative flex h-[768px] w-[1366px] flex-col overflow-hidden bg-[#fafafa] font-['Open_Sans','Noto_Sans',sans-serif]">
      <TitleBar />
      <RibbonTabs />
      <RibbonTools />
      <main className="flex h-[593px] shrink-0">
        <LeftRail />
        <div className="w-[910px] shrink-0"><Canvas /><PageTabs /></div>
        <FiltersPane />
        <DataPane />
        <RightRail />
      </main>
      <StatusBar />
      <Taskbar />
      <div className="pointer-events-none absolute left-[1073px] top-[651px] text-[#797775]/50">
        <Fit w={157} className="text-[18.500px] leading-[22px]">Activate Windows</Fit>
        <Fit w={236} className="mt-[2px] text-[14px] leading-[20px]">Go to Settings to activate Windows.</Fit>
      </div>
    </div>
  );
}
